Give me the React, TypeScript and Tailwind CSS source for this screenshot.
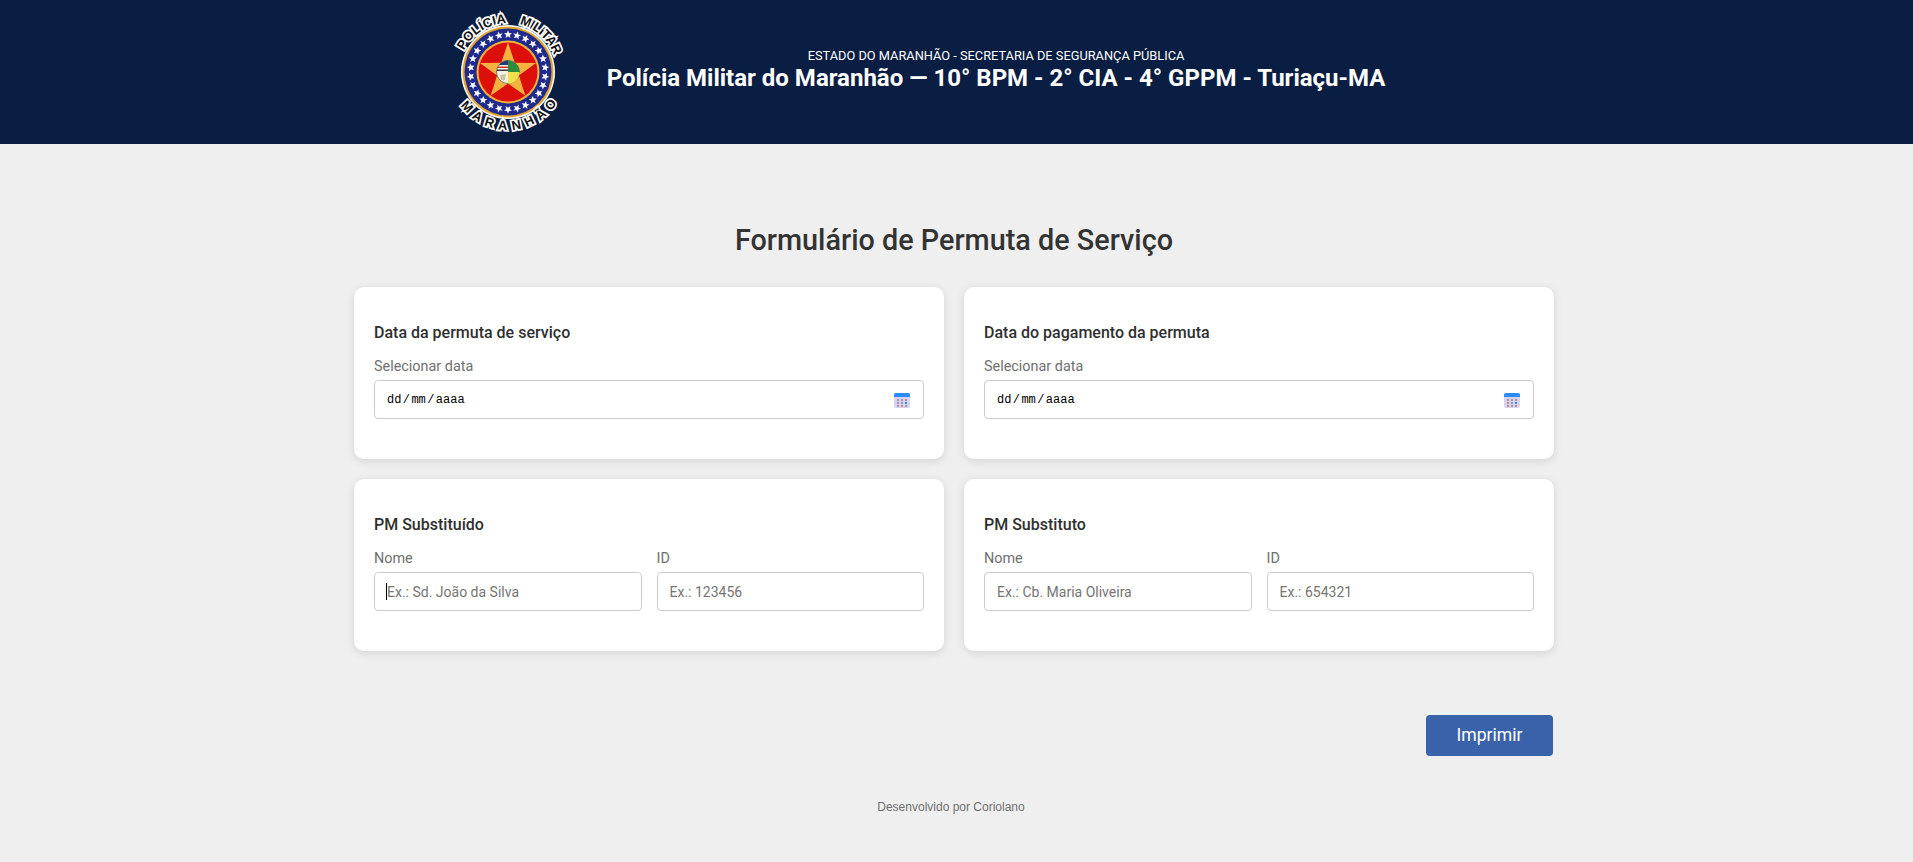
const stars = Array.from({ length: 26 }, (_, i) => (i * 360) / 26);

const starPoints = (cx: number, cy: number, outer: number, inner: number) =>
  Array.from({ length: 10 }, (_, i) => {
    const r = i % 2 === 0 ? outer : inner;
    const a = (Math.PI * i) / 5 - Math.PI / 2;
    return `${(cx + r * Math.cos(a)).toFixed(2)},${(cy + r * Math.sin(a)).toFixed(2)}`;
  }).join(' ');

const Logo = () => (
  <svg width="128" height="136" viewBox="0 0 128 136" className="shrink-0">
    <defs>
      <path id="arc-top" d="M 15 69 A 49 49 0 0 1 113 69" />
      <path id="arc-bottom" d="M 6 69 A 58 58 0 0 0 122 69" />
    </defs>
    <circle cx="64" cy="69" r="47" fill="#ffffff" />
    <circle cx="64" cy="69" r="45.5" fill="#e2a52d" />
    <circle cx="64" cy="69" r="43.5" fill="#1f2a8c" />
    {stars.map((a) => (
      <polygon
        key={a}
        points={starPoints(64, 31.5, 4.2, 1.8)}
        fill="#ffffff"
        transform={`rotate(${a} 64 69)`}
      />
    ))}
    <circle cx="64" cy="69" r="31.5" fill="#f2b33d" />
    <circle cx="64" cy="69" r="29.5" fill="#dc0f0a" />
    <polygon points={starPoints(64, 69, 29.5, 11.5)} fill="#f4b23f" />
    <circle cx="64" cy="69" r="11.5" fill="#f4f1e4" stroke="#3b3b2f" strokeWidth="0.6" />
    <path d="M 64 57.5 A 11.5 11.5 0 0 1 75.5 69 L 64 69 Z" fill="#2e8b3a" />
    <path d="M 75.5 69 A 11.5 11.5 0 0 1 64 80.5 L 64 69 Z" fill="#f3e04a" />
    <path d="M 64 57.5 A 11.5 11.5 0 0 0 55 62 L 64 62 Z" fill="#243a7a" />
    <path d="M 54 63.5 L 64 63.5 L 64 65 L 53.2 65 Z" fill="#c8342c" />
    <path d="M 53 66.5 L 64 66.5 L 64 68 L 52.6 68 Z" fill="#3b3b3b" />
    <path d="M 56 72 L 62 71 L 61 77 L 57 77 Z" fill="#c9c4a8" />
    <text fontFamily="'Liberation Sans', sans-serif" fontSize="13" fontWeight="700" fill="#111111" stroke="#ffffff" strokeWidth="3.5" paintOrder="stroke">
      <textPath href="#arc-top" startOffset="14.5%">POLÍCIA</textPath>
    </text>
    <text fontFamily="'Liberation Sans', sans-serif" fontSize="13" fontWeight="700" fill="#111111" stroke="#ffffff" strokeWidth="3.5" paintOrder="stroke" letterSpacing="-0.6">
      <textPath href="#arc-top" startOffset="57.5%">MILITAR</textPath>
    </text>
    <text fontFamily="'Liberation Sans', sans-serif" fontSize="13" fontWeight="700" fill="#111111" stroke="#ffffff" strokeWidth="3.5" paintOrder="stroke" letterSpacing="5.2">
      <textPath href="#arc-bottom" startOffset="19.5%">MARANHÃO</textPath>
    </text>
  </svg>
);

const CalendarIcon = () => (
  <svg width="16" height="16" viewBox="0 0 16 16" className="shrink-0">
    <rect x="0" y="1" width="16" height="15" rx="2" fill="#dcd3ea" />
    <path d="M0 5V3a2 2 0 0 1 2-2h12a2 2 0 0 1 2 2v2Z" fill="#2a8bff" />
    {[7, 10, 13].map((y) =>
      [3, 7, 11].map((x) => (
        <rect key={`${x}-${y}`} x={x} y={y} width="2" height="2" fill={x === 11 && y === 10 ? '#2a8bff' : '#9c97ac'} />
      )),
    )}
  </svg>
);

const DateCard = ({ title }: { title: string }) => (
  <section className="bg-white rounded-[10px] shadow-[0_2px_8px_rgba(0,0,0,0.12)] p-5 h-[172px]">
    <h2 className="text-base leading-[20px] font-medium text-[#2f2f2f] mt-[16px]">{title}</h2>
    <label className="block text-[14.4px] leading-[18px] text-[#6f6f6f] mt-[15px]">Selecionar data</label>
    <div className="mt-[4px] h-[39px] border border-[#cccccc] rounded-[4px] pl-3 pr-[13px] flex items-center justify-between">
      <span className="text-xs pt-px text-black font-['Liberation_Mono',monospace] font-medium">
        dd<span className="mx-[1.4px]">/</span>mm<span className="mx-[1.4px]">/</span>aaaa
      </span>
      <CalendarIcon />
    </div>
  </section>
);

const TextField = ({ label, placeholder, caret }: { label: string; placeholder: string; caret?: boolean }) => (
  <div className="flex-1 min-w-0">
    <label className="block text-[14.4px] leading-[18px] text-[#6f6f6f]">{label}</label>
    <div className="relative mt-[4px]">
      <input
        readOnly
        placeholder={placeholder}
        className="w-full h-[39px] border border-[#cccccc] rounded-[4px] px-3 text-sm text-[#222222] placeholder:text-[#757575] outline-none"
      />
      {caret && <span className="absolute left-[12px] top-[11px] w-px h-[17px] bg-black" />}
    </div>
  </div>
);

const PersonCard = ({
  title,
  namePlaceholder,
  idPlaceholder,
  caret,
}: {
  title: string;
  namePlaceholder: string;
  idPlaceholder: string;
  caret?: boolean;
}) => (
  <section className="bg-white rounded-[10px] shadow-[0_2px_8px_rgba(0,0,0,0.12)] p-5 h-[172px]">
    <h2 className="text-base leading-[20px] font-medium text-[#2f2f2f] mt-[16px]">{title}</h2>
    <div className="flex gap-[15px] mt-[15px]">
      <TextField label="Nome" placeholder={namePlaceholder} caret={caret} />
      <TextField label="ID" placeholder={idPlaceholder} />
    </div>
  </section>
);

export default function App() {
  return (
    <div className="min-h-[862px] bg-[#efefef] font-['Roboto',sans-serif]">
      <header className="h-[144px] bg-[#0a1d42] flex items-start pl-[444px] pt-[3px]">
        <Logo />
        <div className="w-[780px] ml-[34px] mt-[45px] text-center text-white">
          <p className="text-[12.8px] leading-[15px]">ESTADO DO MARANHÃO - SECRETARIA DE SEGURANÇA PÚBLICA</p>
          <h1 className="text-[24px] leading-[31px] font-bold">
            Polícia Militar do Maranhão — 10° BPM - 2° CIA - 4° GPPM - Turiaçu-MA
          </h1>
        </div>
      </header>

      <main className="w-[1200px] ml-[354px]">
        <h2 className="text-center text-[28.8px] leading-[36px] font-medium text-[#333333] mt-[78px]">
          Formulário de Permuta de Serviço
        </h2>
        <div className="grid grid-cols-2 gap-5 mt-[29px]">
          <DateCard title="Data da permuta de serviço" />
          <DateCard title="Data do pagamento da permuta" />
          <PersonCard title="PM Substituído" namePlaceholder="Ex.: Sd. João da Silva" idPlaceholder="Ex.: 123456" caret />
          <PersonCard title="PM Substituto" namePlaceholder="Ex.: Cb. Maria Oliveira" idPlaceholder="Ex.: 654321" />
        </div>
        <div className="flex justify-end mt-[64px]">
          <button className="w-[127px] h-[41px] bg-[#3a62aa] rounded-[4px] text-white text-[17.6px] mr-px">Imprimir</button>
        </div>
      </main>

      <footer className="w-[1200px] ml-[351px] mt-[43px] text-center text-xs leading-[16px] text-[#6f6f6f] font-['Liberation_Sans',sans-serif]">
        Desenvolvido por Coriolano
      </footer>
    </div>
  );
}
